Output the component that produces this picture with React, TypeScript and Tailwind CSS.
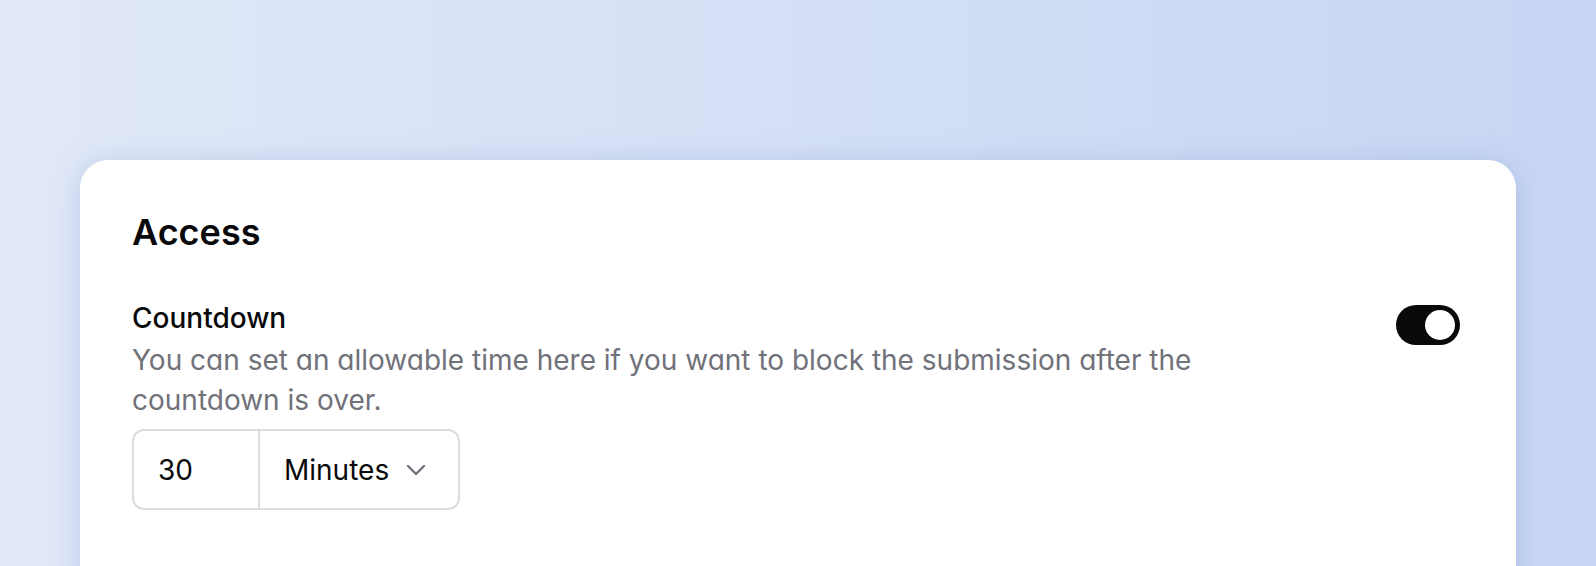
import React from "react";

export default function App() {
  return (
    <div className="h-[566px] w-full overflow-hidden bg-gradient-to-r from-[#e1e9f8] to-[#c7d6f3] px-[80px] pt-[160px] font-['Inter','Noto_Sans',sans-serif]">
      <div className="h-[520px] rounded-[28px] bg-white pl-[52px] pr-[56px] pt-[52px] shadow-[0_4px_28px_rgba(120,140,200,0.35)]">
        <h2 className="text-[36px] font-semibold leading-[40px] text-[#09090b]">Access</h2>
        <div className="mt-[48px] flex items-start justify-between">
          <div className="flex flex-col">
            <div className="text-[28px] font-medium leading-[36px] text-[#09090b]">Countdown</div>
            <p className="mt-[4px] max-w-[1130px] text-[28px] leading-[40px] text-[#71717a] [font-feature-settings:'cv11']">
              You can set an allowable time here if you want to block the submission after the countdown is over.
            </p>
            <div className="mt-[9px] flex h-[81px] w-[328px] rounded-[12px] border-2 border-[#dcdcdf]">
              <div className="flex w-[126px] items-center border-r-2 border-[#dcdcdf] pl-[24px] text-[28px] text-[#09090b]">
                30
              </div>
              <div className="flex flex-1 items-center justify-between pl-[24px] pr-[32px] text-[28px] text-[#09090b]">
                <span>Minutes</span>
                <svg width="20" height="12" viewBox="0 0 20 12" fill="none" stroke="#71717a" strokeWidth="2.4" strokeLinecap="round" strokeLinejoin="round">
                  <path d="M2 2 L10 10 L18 2" />
                </svg>
              </div>
            </div>
          </div>
          <div className="mt-[5px] flex h-[40px] w-[64px] shrink-0 items-center justify-end rounded-full bg-[#09090b] pr-[5px]">
            <div className="h-[30px] w-[30px] rounded-full bg-white" />
          </div>
        </div>
      </div>
    </div>
  );
}
